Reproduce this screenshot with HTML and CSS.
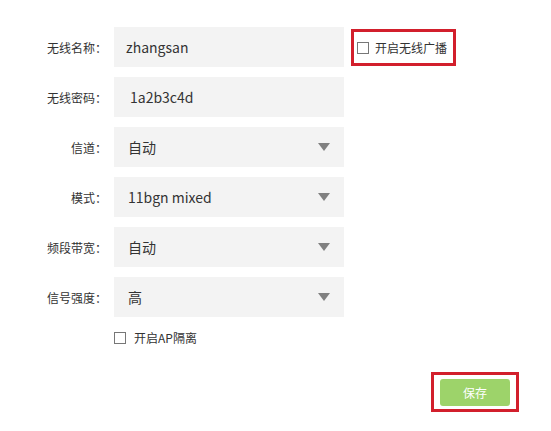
FILE: index.html
```html
<!DOCTYPE html>
<html lang="zh-CN">
<head>
<meta charset="utf-8">
<title>无线设置</title>
<link rel="stylesheet" href="styles.css">
</head>
<body>
<div class="form">
  <div class="row">
    <div class="label">无线名称<span class="colon">：</span></div>
    <div class="field"><span class="value">zhangsan</span></div>
    <div class="mark mark-check">
      <span class="cb"></span><span class="cb-text">开启无线广播</span>
    </div>
  </div>
  <div class="row">
    <div class="label">无线密码<span class="colon">：</span></div>
    <div class="field"><span class="value pw">1a2b3c4d</span></div>
  </div>
  <div class="row">
    <div class="label">信道<span class="colon">：</span></div>
    <div class="field select"><span class="value">自动</span><span class="arrow"></span></div>
  </div>
  <div class="row">
    <div class="label">模式<span class="colon">：</span></div>
    <div class="field select"><span class="value">11bgn mixed</span><span class="arrow"></span></div>
  </div>
  <div class="row">
    <div class="label">频段带宽<span class="colon">：</span></div>
    <div class="field select"><span class="value">自动</span><span class="arrow"></span></div>
  </div>
  <div class="row">
    <div class="label">信号强度<span class="colon">：</span></div>
    <div class="field select"><span class="value">高</span><span class="arrow"></span></div>
  </div>
  <div class="ap-row">
    <span class="cb"></span><span class="cb-text ap-text">开启AP隔离</span>
  </div>
  <div class="save-row">
    <div class="mark mark-save">
      <button class="save">保存</button>
    </div>
  </div>
</div>
</body>
</html>
```

FILE: styles.css
```css
html, body {
  margin: 0;
  padding: 0;
  background: #ffffff;
}
body {
  font-family: "Noto Sans CJK SC", "Noto Sans", sans-serif;
  color: #333333;
}
.form {
  padding-top: 27px;
}
.row {
  display: flex;
  align-items: center;
  height: 40px;
  margin-bottom: 10px;
}
.label {
  width: 107px;
  text-align: right;
  font-size: 12px;
  color: #333333;
}
.colon {
  font-family: "Noto Sans CJK TC", "Noto Sans CJK SC", sans-serif;
}
.field {
  margin-left: 7px;
  width: 230px;
  height: 40px;
  background: #f3f3f3;
  display: flex;
  align-items: center;
  box-sizing: border-box;
  padding-left: 12px;
}
.value {
  font-size: 14px;
  color: #333333;
}
.pw {
  margin-left: 4px;
}
.select .value {
  margin-left: 2px;
}
.arrow {
  margin-left: auto;
  margin-right: 14px;
  width: 0;
  height: 0;
  border-left: 6px solid transparent;
  border-right: 6px solid transparent;
  border-top: 8px solid #808080;
}
.mark {
  border: 3px solid #d21f2c;
  box-sizing: border-box;
}
.mark-check {
  margin-left: 7px;
  width: 105px;
  height: 37px;
  display: flex;
  align-items: center;
  padding-left: 3px;
  align-self: flex-start;
  margin-top: 2px;
}
.cb {
  width: 12px;
  height: 12px;
  box-sizing: border-box;
  border: 1px solid #777777;
  background: #ffffff;
  flex: none;
}
.cb-text {
  font-size: 12px;
  margin-left: 6px;
  color: #333333;
  line-height: 12px;
}
.ap-row {
  display: flex;
  align-items: center;
  margin-left: 114px;
  margin-top: 15px;
  height: 12px;
}
.ap-text {
  margin-left: 8px;
}
.save-row {
  display: flex;
  justify-content: flex-end;
  padding-right: 32px;
  margin-top: 28px;
}
.mark-save {
  width: 88px;
  height: 40px;
  display: flex;
  align-items: center;
  justify-content: center;
}
.save {
  width: 70px;
  height: 27px;
  border: none;
  border-radius: 3px;
  background: #9dd36a;
  color: #ffffff;
  font-family: "Noto Sans CJK SC", sans-serif;
  font-size: 12px;
  padding: 0;
}
```
